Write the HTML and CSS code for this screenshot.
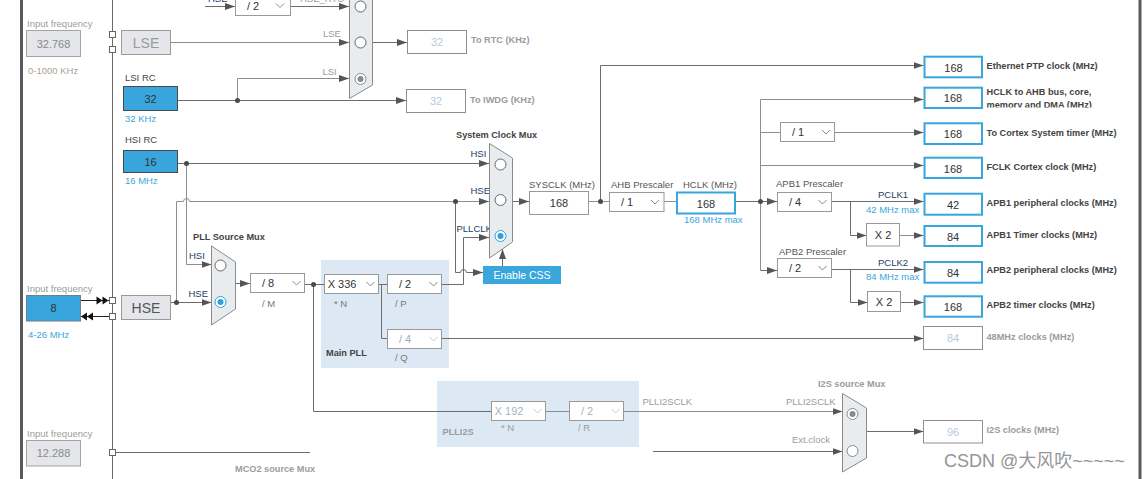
FILE: index.html
```html
<!DOCTYPE html>
<html lang="en">
<head>
<meta charset="utf-8">
<title>Clock Configuration</title>
<link rel="stylesheet" href="styles.css">
</head>
<body>
<svg class="canvas" width="1145" height="479" viewBox="0 0 1145 479" xmlns="http://www.w3.org/2000/svg">
  <defs>
    <marker id="ar" viewBox="0 0 10 7" markerWidth="10" markerHeight="7" refX="10" refY="3.5" orient="auto" markerUnits="userSpaceOnUse">
      <path class="ah" d="M0,0 L10,3.5 L0,7 z"/>
    </marker>
    <clipPath id="clipm"><rect x="980" y="94" width="160" height="13.5"/></clipPath>
  </defs>

  <!-- frame bars -->
  <rect class="bar" x="20" y="0" width="3" height="479"/>
  <rect class="bar" x="1138.5" y="0" width="3" height="479"/>
  <path class="w vline" d="M112.5,0 V479"/>

  <!-- regions -->
  <rect class="region" x="321" y="260" width="128" height="108"/>
  <rect class="region" x="437" y="381" width="202" height="66"/>

  <!-- wires -->
  <path class="w arr" d="M205,6.5 H235"/>
  <path class="w arr" d="M290.5,6.5 H349"/>
  <path class="w wl arr" d="M170.5,42.5 H349"/>
  <path class="w arr" d="M177.5,100.5 H406"/>
  <path class="w wl arr" d="M237.5,100.5 V78.5 H349"/>
  <path class="w arr" d="M372.5,42.5 H407"/>
  <path class="w arr" d="M177.5,163.5 H489"/>
  <path class="w wl arr" d="M186.5,163.5 V264.5 H211.5"/>
  <path class="w wl arr" d="M176.5,302.5 V201.5 H183.5 A3,3 0 0 1 189.5,201.5 H489"/>
  <path class="w arr" d="M170.5,302.5 H211.5"/>
  <path class="w arr" d="M455.5,201.5 V272.5 H460.5 A3,3 0 0 1 466.5,272.5 H483"/>
  <path class="w arr" d="M235.5,283.5 H250"/>
  <path class="w" d="M304.5,284.5 H324.5"/>
  <path class="w" d="M313.5,284.5 V411.5 H491.5"/>
  <path class="w" d="M378.5,284.5 H387.5"/>
  <path class="w" d="M381.5,284.5 V338.5 H387.5"/>
  <path class="w arr" d="M441.5,284.5 H463.5 V237.5 H489"/>
  <path class="w arr" d="M502.5,266 V249"/>
  <path class="w arr" d="M512.5,201.5 H529"/>
  <path class="w wl" d="M588.5,201.5 H609.5"/>
  <path class="w arr" d="M600.5,201.5 V65.5 H923.5"/>
  <path class="w wl" d="M664,201.5 H676"/>
  <path class="w arr" d="M736,201.5 H777"/>
  <path class="w wl arr" d="M760.5,270.5 V99.5 H923.5"/>
  <path class="w arr" d="M760.5,270.5 H777"/>
  <path class="w wl" d="M760.5,132.5 H780.5"/>
  <path class="w wl arr" d="M834.5,132.5 H923.5"/>
  <path class="w wl arr" d="M760.5,165.5 H923.5"/>
  <path class="w arr" d="M831.5,201.5 H923.5"/>
  <path class="w arr" d="M850.5,201.5 V235.5 H866.5"/>
  <path class="w wl arr" d="M899.5,235.5 H923.5"/>
  <path class="w arr" d="M831.5,269.5 H923.5"/>
  <path class="w arr" d="M850.5,269.5 V302.5 H867.5"/>
  <path class="w arr" d="M900.5,302.5 H923.5"/>
  <path class="w arr" d="M441.5,338.5 H923.5"/>
  <path class="w wl" d="M545.5,411.5 H569.5"/>
  <path class="w wl arr" d="M623.5,411.5 H842.5"/>
  <path class="w arr" d="M653,451.5 H842.5"/>
  <path class="w arr" d="M866.5,431.5 H923.5"/>
  <path class="w" d="M112.5,452.5 H310"/>
  <path class="w dark" d="M80.5,300.5 H109.5"/>
  <path class="w dark" d="M80.5,316.5 H109.5"/>
  <polygon class="blk" points="96.5,296.5 102.5,300.5 96.5,304.5"/>
  <polygon class="blk" points="102.5,296.5 108.5,300.5 102.5,304.5"/>
  <polygon class="blk" points="87,312.5 81,316.5 87,320.5"/>
  <polygon class="blk" points="93,312.5 87,316.5 93,320.5"/>

  <!-- junction dots -->
  <circle class="dot" cx="237.5" cy="100.5" r="2.5"/>
  <circle class="dot" cx="186.5" cy="163.5" r="2.5"/>
  <circle class="dot" cx="176.5" cy="302.5" r="2.5"/>
  <circle class="dot" cx="455.5" cy="201.5" r="2.5"/>
  <circle class="dot" cx="313.5" cy="284.5" r="2.5"/>
  <circle class="dot" cx="600.5" cy="201.5" r="2.5"/>
  <circle class="dot" cx="760.5" cy="201.5" r="2.5"/>

  <!-- connector squares -->
  <rect class="sq" x="109.5" y="31.5" width="6" height="6"/>
  <rect class="sq" x="109.5" y="46.5" width="6" height="6"/>
  <rect class="sq" x="109.5" y="297.5" width="6" height="6"/>
  <rect class="sq" x="109.5" y="313.5" width="6" height="6"/>
  <rect class="sq" x="109.5" y="449.5" width="6" height="6"/>

  <!-- left inputs -->
  <text class="t tg" x="27" y="23">Input frequency</text>
  <rect class="in-box" x="26.5" y="30.5" width="54" height="26"/>
  <text class="num num-g" x="53.5" y="43.5">32.768</text>
  <text class="t tt" x="28" y="70">0-1000 KHz</text>

  <text class="t tg" x="27" y="288">Input frequency</text>
  <rect class="blue-box in-blue" x="26.5" y="295.5" width="54" height="25.5"/>
  <text class="num" x="53.5" y="308">8</text>
  <text class="t tbl" x="28" y="334">4-26 MHz</text>

  <text class="t tg" x="27" y="433">Input frequency</text>
  <rect class="in-box" x="26.5" y="440.5" width="54" height="25.5"/>
  <text class="num num-g" x="53.5" y="453">12.288</text>
  <text class="t tg" x="28" y="482">MHz</text>

  <!-- LSE / HSE sources -->
  <rect class="src-box" x="121.5" y="30.5" width="49" height="24"/>
  <text class="big big-g" x="146" y="42.5">LSE</text>
  <rect class="src-box" x="121.5" y="295.5" width="49" height="24"/>
  <text class="big" x="146" y="307.5">HSE</text>

  <!-- LSI / HSI -->
  <text class="t" x="125" y="77">LSI RC</text>
  <rect class="blue-box" x="123.5" y="86.5" width="54" height="24"/>
  <text class="num" x="150.5" y="98.5">32</text>
  <text class="t tbl" x="125" y="118">32 KHz</text>

  <text class="t" x="125" y="139">HSI RC</text>
  <rect class="blue-box" x="123.5" y="150.5" width="54" height="22"/>
  <text class="num" x="150.5" y="161.5">16</text>
  <text class="t tbl" x="125" y="180">16 MHz</text>

  <!-- top HSE /2 -->
  <text class="t tn" x="208" y="-2">HSE</text>
  <rect class="dd" x="235.5" y="-10" width="55" height="25.5"/>
  <text class="num" x="253" y="6">/ 2</text>
  <polyline class="chev" points="276,3.5 280,7.5 284,3.5"/>
  <text class="t tg" x="300" y="-2">HSE_RTC</text>

  <!-- RTC mux -->
  <polygon class="mux" points="349.5,-30 372.5,-15 372.5,85 349.5,98.5"/>
  <circle class="radio" cx="360.5" cy="6.5" r="5.5"/>
  <circle class="radio" cx="360.5" cy="42.5" r="5.5"/>
  <circle class="radio radio-g" cx="360.5" cy="79" r="5.5"/>
  <circle class="radio-gdot" cx="360.5" cy="79" r="3"/>
  <text class="t tg" x="323" y="33">LSE</text>
  <text class="t tg" x="322.5" y="71">LSI</text>

  <rect class="dis-box" x="407.5" y="30.5" width="59" height="23"/>
  <text class="num num-d" x="437" y="42">32</text>
  <text class="tb tg" x="471" y="40">To RTC (KHz)</text>
  <rect class="dis-box" x="406.5" y="89.5" width="59" height="23"/>
  <text class="num num-d" x="436" y="101">32</text>
  <text class="tb tg" x="470" y="100">To IWDG (KHz)</text>

  <!-- PLL source mux -->
  <text class="tb" x="193" y="237">PLL Source Mux</text>
  <text class="t tn" x="189" y="255">HSI</text>
  <text class="t tn" x="188.5" y="293">HSE</text>
  <polygon class="mux" points="211.5,246 235.5,262 235.5,309 211.5,325"/>
  <circle class="radio" cx="220.5" cy="265.5" r="5.5"/>
  <circle class="radio radio-on" cx="220.5" cy="302" r="5.5"/>
  <circle class="radio-dot" cx="220.5" cy="302" r="3"/>

  <rect class="dd" x="250.5" y="273.5" width="54" height="19"/>
  <text class="num" x="268" y="283">/ 8</text>
  <polyline class="chev" points="292.5,281 296.5,285 300.5,281"/>
  <text class="t tl" x="262" y="303">/ M</text>

  <!-- Main PLL -->
  <rect class="dd" x="324.5" y="274.5" width="54" height="19"/>
  <text class="num" x="342" y="284">X 336</text>
  <polyline class="chev" points="366.5,282 370.5,286 374.5,282"/>
  <text class="t tl" x="334" y="303">* N</text>

  <rect class="dd" x="387.5" y="274.5" width="54" height="19"/>
  <text class="num" x="405" y="284">/ 2</text>
  <polyline class="chev" points="429.5,282 433.5,286 437.5,282"/>
  <text class="t tl" x="395" y="303">/ P</text>

  <rect class="dd" x="387.5" y="329.5" width="54" height="19"/>
  <text class="num num-dd" x="405" y="339">/ 4</text>
  <polyline class="chev chev-d" points="429.5,337 433.5,341 437.5,337"/>
  <text class="t tl" x="395" y="357">/ Q</text>
  <text class="tb" x="326" y="353">Main PLL</text>

  <!-- System clock mux -->
  <text class="tb" x="456" y="135">System Clock Mux</text>
  <text class="t tn" x="470.5" y="153">HSI</text>
  <text class="t tn" x="470.5" y="190">HSE</text>
  <text class="t tn" x="456.5" y="228">PLLCLK</text>
  <polygon class="mux" points="489.5,143.5 512.5,158 512.5,242 489.5,258"/>
  <circle class="radio" cx="500.5" cy="164.5" r="5.5"/>
  <circle class="radio" cx="500.5" cy="200" r="5.5"/>
  <circle class="radio radio-on" cx="500.5" cy="236" r="5.5"/>
  <circle class="radio-dot" cx="500.5" cy="236" r="3"/>

  <rect class="css-btn" x="483" y="266" width="78" height="18"/>
  <text class="btn-t" x="522" y="275">Enable CSS</text>

  <!-- SYSCLK / AHB / HCLK -->
  <text class="t tm" x="529" y="184">SYSCLK (MHz)</text>
  <rect class="dd" x="529.5" y="191.5" width="59" height="23"/>
  <text class="num" x="559" y="203">168</text>

  <text class="t tm" x="611" y="184">AHB Prescaler</text>
  <rect class="dd" x="609.5" y="192.5" width="54.5" height="19"/>
  <text class="num" x="627" y="202">/ 1</text>
  <polyline class="chev" points="651,200 655,204 659,200"/>

  <text class="t tm" x="683" y="184">HCLK (MHz)</text>
  <rect class="out-box" x="677" y="192.5" width="58" height="21"/>
  <text class="num" x="706" y="203.5">168</text>
  <text class="t tbl" x="684" y="219.5">168 MHz max</text>

  <!-- Cortex /1 -->
  <rect class="dd" x="780.5" y="122.5" width="54" height="19"/>
  <text class="num" x="798" y="132">/ 1</text>
  <polyline class="chev" points="822,130 826,134 830,130"/>

  <!-- APB prescalers -->
  <text class="t tm" x="776" y="183.5">APB1 Prescaler</text>
  <rect class="dd" x="777.5" y="192.5" width="54" height="19"/>
  <text class="num" x="795" y="202">/ 4</text>
  <polyline class="chev" points="818.5,200 822.5,204 826.5,200"/>
  <text class="t tn" x="878" y="194">PCLK1</text>
  <text class="t tbl" x="866" y="209.5">42 MHz max</text>
  <rect class="dd" x="866.5" y="223.5" width="33" height="22.5"/>
  <text class="num" x="883" y="235">X 2</text>

  <text class="t tm" x="779" y="251">APB2 Prescaler</text>
  <rect class="dd" x="777.5" y="258.5" width="54" height="19"/>
  <text class="num" x="795" y="268">/ 2</text>
  <polyline class="chev" points="818.5,266 822.5,270 826.5,266"/>
  <text class="t tn" x="878" y="262">PCLK2</text>
  <text class="t tbl" x="866" y="276">84 MHz max</text>
  <rect class="dd" x="867.5" y="291.5" width="33" height="20"/>
  <text class="num" x="884" y="302">X 2</text>

  <!-- outputs -->
  <rect class="out-box" x="924.5" y="56.7" width="57.5" height="20.6"/>
  <text class="num" x="953.5" y="67.5">168</text>
  <text class="tb" x="986.5" y="65.7">Ethernet PTP clock (MHz)</text>

  <rect class="out-box" x="924.5" y="87.7" width="57.5" height="20.3"/>
  <text class="num" x="953" y="98">168</text>
  <text class="tb" x="986.5" y="91.7">HCLK to AHB bus, core,</text>
  <text class="tb" x="986.5" y="104.5" clip-path="url(#clipm)">memory and DMA (MHz)</text>

  <rect class="out-box" x="924.5" y="123.3" width="57.5" height="20.7"/>
  <text class="num" x="953" y="134">168</text>
  <text class="tb" x="986.5" y="132.7">To Cortex System timer (MHz)</text>

  <rect class="out-box" x="924.5" y="157.7" width="57.5" height="20.3"/>
  <text class="num" x="953" y="168.5">168</text>
  <text class="tb" x="986.5" y="167">FCLK Cortex clock (MHz)</text>

  <rect class="out-box" x="924.5" y="193.7" width="57.5" height="21"/>
  <text class="num" x="953" y="204.5">42</text>
  <text class="tb" x="986.5" y="202.7">APB1 peripheral clocks (MHz)</text>

  <rect class="out-box" x="924.5" y="226" width="57.5" height="20"/>
  <text class="num" x="953" y="236.5">84</text>
  <text class="tb" x="986.5" y="235">APB1 Timer clocks (MHz)</text>

  <rect class="out-box" x="924.5" y="262" width="57.5" height="20.7"/>
  <text class="num" x="953" y="272.5">84</text>
  <text class="tb" x="986.5" y="270">APB2 peripheral clocks (MHz)</text>

  <rect class="out-box" x="924.5" y="296.3" width="57.5" height="20.4"/>
  <text class="num" x="953" y="306.5">168</text>
  <text class="tb" x="986.5" y="304.7">APB2 timer clocks (MHz)</text>

  <rect class="dis-box" x="923.5" y="326.5" width="59" height="23"/>
  <text class="num num-d" x="953" y="338">84</text>
  <text class="tb tg" x="986.5" y="337">48MHz clocks (MHz)</text>

  <rect class="dis-box" x="923.5" y="420.5" width="59" height="22.5"/>
  <text class="num num-d" x="953" y="432">96</text>
  <text class="tb tg" x="986.5" y="430">I2S clocks (MHz)</text>

  <!-- PLLI2S -->
  <rect class="dd" x="491.5" y="401.5" width="54" height="19"/>
  <text class="num num-dg" x="509" y="411">X 192</text>
  <polyline class="chev chev-d" points="533.5,409 537.5,413 541.5,409"/>
  <text class="t tg" x="501" y="427">* N</text>
  <rect class="dd" x="569.5" y="401.5" width="54" height="19"/>
  <text class="num num-dg" x="587" y="411">/ 2</text>
  <polyline class="chev chev-d" points="611.5,409 615.5,413 619.5,409"/>
  <text class="t tg" x="578" y="427">/ R</text>
  <text class="tb tg" x="442.5" y="432">PLLI2S</text>

  <text class="t tg" x="642.5" y="401">PLLI2SCLK</text>
  <text class="t tg" x="786" y="401">PLLI2SCLK</text>
  <text class="t tg" x="792" y="439.5">Ext.clock</text>

  <!-- I2S mux -->
  <text class="tb tg" x="818" y="384">I2S source Mux</text>
  <polygon class="mux" points="842.5,393.5 866.5,408 866.5,458 842.5,472"/>
  <circle class="radio radio-g" cx="852.5" cy="414" r="5.5"/>
  <circle class="radio-gdot" cx="852.5" cy="414" r="3"/>
  <circle class="radio radio-g" cx="852.5" cy="451" r="5.5"/>

  <!-- MCO2 -->
  <text class="tb tg" x="235" y="469">MCO2 source Mux</text>

  <!-- watermark -->
  <text class="wm" x="944" y="461">CSDN @大风吹~~~~~</text>
</svg>
</body>
</html>
```

FILE: styles.css
```css
html, body {
  margin: 0;
  padding: 0;
  background: #ffffff;
  overflow: hidden;
}

.canvas {
  display: block;
  width: 1145px;
  height: 479px;
  font-family: "Liberation Sans", Arial, sans-serif;
}

.canvas text {
  dominant-baseline: central;
}

/* wires */
.w {
  fill: none;
  stroke: #6c6c6c;
  stroke-width: 1;
}
.wl { stroke: #8e8e8e; }
.dark { stroke: #222; }
.vline { stroke: #6a6a6a; }
.arr { marker-end: url(#ar); }
.ah { fill: #555555; }
.blk { fill: #111111; }
.dot { fill: #4a4a4a; }
.bar { fill: #5a5a5a; }

/* shapes */
.sq { fill: #ffffff; stroke: #666666; }
.in-box { fill: #e4e6e9; stroke: #a3a3a3; }
.src-box { fill: #e4e6e9; stroke: #9a9a9a; }
.blue-box { fill: #38a6dc; stroke: #4a4a4a; }
.in-blue { stroke: #6b7f8d; }
.out-box { fill: #ffffff; stroke: #36a6dc; stroke-width: 2; }
.dis-box { fill: #ffffff; stroke: #8f8f8f; }
.dd { fill: #ffffff; stroke: #999999; }
.chev { fill: none; stroke: #8a8a8a; }
.chev-d { stroke: #c3ccd5; }
.mux { fill: #e9ecef; stroke: #8a8a8a; }
.region { fill: #dce8f4; }
.css-btn { fill: #3aa7dc; }

.radio { fill: #ffffff; stroke: #666666; }
.radio-on { stroke: #2ea0dc; }
.radio-dot { fill: #2ea0dc; }
.radio-g { stroke: #8a8a8a; }
.radio-gdot { fill: #8a8a8a; }

/* text */
.t {
  font-size: 9.5px;
  fill: #444444;
}
.tb {
  font-size: 9.2px;
  font-weight: bold;
  fill: #444444;
}
.tg { fill: #9c9c9c; }
.tt { fill: #ad9f94; }
.tl { fill: #777777; }
.tm { fill: #555555; }
.tn { fill: #1d3d66; }
.tbl { fill: #3aa6dc; }

.num {
  font-size: 11px;
  fill: #333333;
  text-anchor: middle;
}
.num-g { fill: #8a8a8a; }
.num-d { fill: #b9cadc; }
.num-dd { fill: #9aabbd; }
.num-dg { fill: #a9b2bb; }

.big {
  font-size: 14px;
  fill: #555555;
  text-anchor: middle;
}
.big-g { fill: #9a9a9a; }

.btn-t {
  font-size: 10.5px;
  fill: #ffffff;
  text-anchor: middle;
}

.wm {
  font-family: "Liberation Sans", "Noto Sans CJK SC", sans-serif;
  font-size: 18px;
  fill: #8a8a8a;
  opacity: 0.9;
}
```
